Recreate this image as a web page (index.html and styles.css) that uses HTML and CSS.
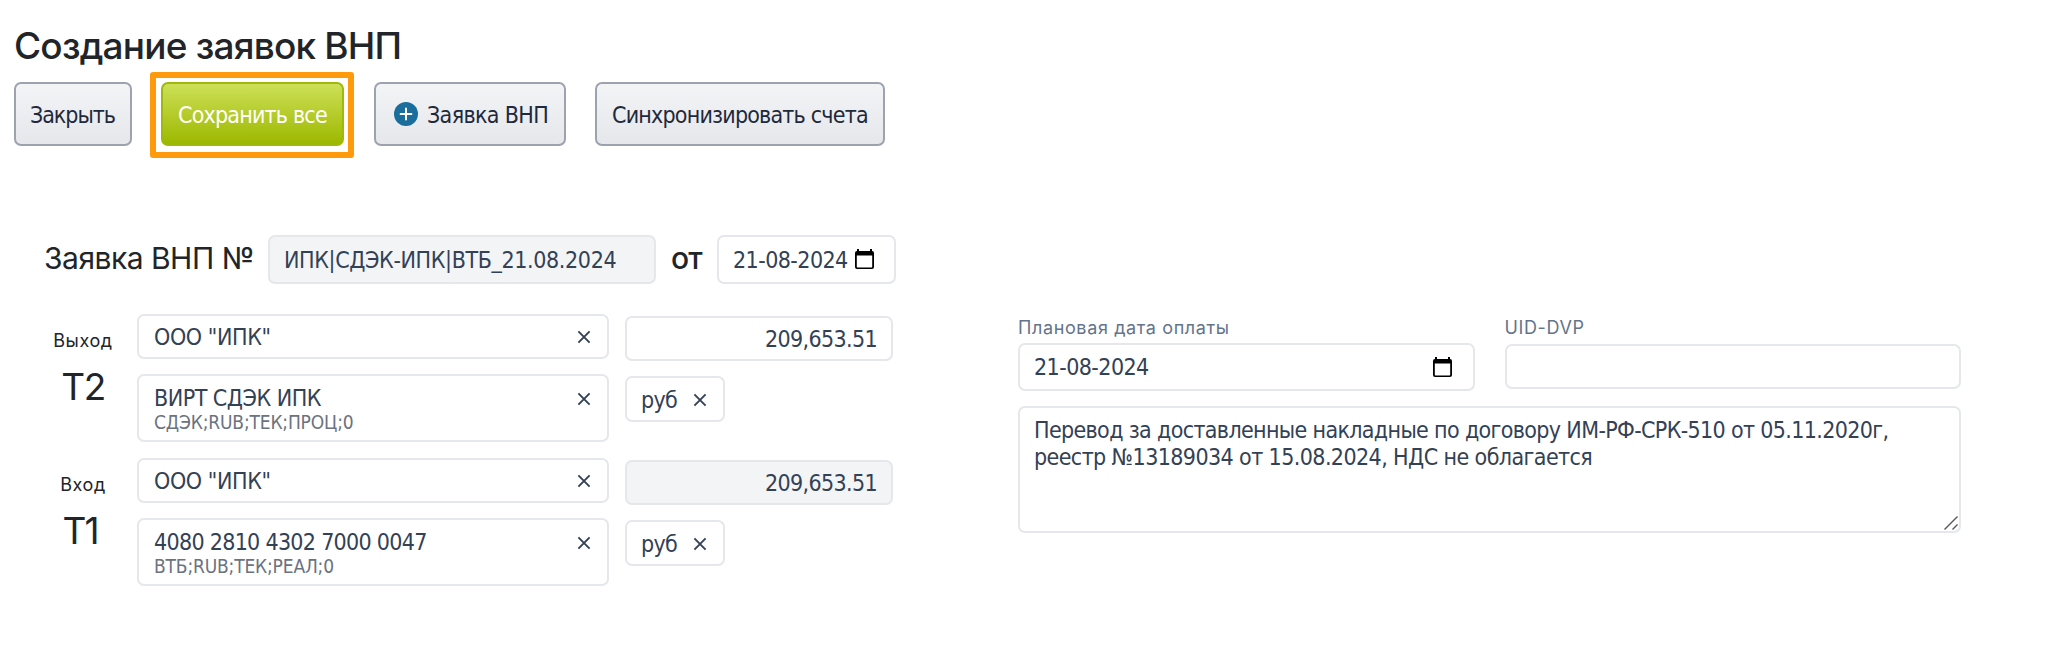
FILE: index.html
```
<!DOCTYPE html>
<html lang="ru">
<head>
<meta charset="utf-8">
<title>Создание заявок ВНП</title>
<link rel="stylesheet" href="styles.css">
</head>
<body>
<svg class="defs" width="0" height="0">
  <symbol id="calendar" viewBox="0 0 19 20"><path d="M2 0h2v2h11V0h2v2a2 2 0 0 1 2 2v14a2 2 0 0 1-2 2H2a2 2 0 0 1-2-2V4a2 2 0 0 1 2-2zM1.8 6.4v11.3q0 .7.7.7h14q.7 0 .7-.7V6.4z" fill="#000" fill-rule="evenodd"/></symbol>
  <symbol id="cross" viewBox="0 0 14 14"><path d="M1.4 1.4l11.2 11.2M12.6 1.4L1.4 12.6" stroke="#334155" stroke-width="1.9" fill="none"/></symbol>
</svg>
<main class="page">
  <h1 class="title">Создание заявок ВНП</h1>
  <div class="toolbar">
    <button class="btn btn-close">Закрыть</button>
    <div class="highlight"><button class="btn btn-save">Сохранить все</button></div>
    <button class="btn btn-add">
      <svg class="plus" viewBox="0 0 24 24"><circle cx="12" cy="12" r="12" fill="#1b6d9b"/><path d="M12 6.6v10.8M6.6 12h10.8" stroke="#fff" stroke-width="2" stroke-linecap="round"/></svg>
      <span>Заявка ВНП</span></button>
    <button class="btn btn-sync">Синхронизировать счета</button>
  </div>
  <div class="request">
    <span class="request-label">Заявка ВНП №</span>
    <div class="field number muted"><span>ИПК|СДЭК-ИПК|ВТБ_21.08.2024</span></div>
    <span class="request-from">от</span>
    <div class="field date-short"><span>21-08-2024</span><svg class="cal"><use href="#calendar"/></svg></div>
  </div>
  <div class="content">
    <div class="transfers">
      <section class="transfer">
        <div class="side"><span class="dir">Выход</span><span class="code">Т2</span></div>
        <div class="accounts">
          <div class="field single"><span class="company">ООО "ИПК"</span><svg class="x"><use href="#cross"/></svg></div>
          <div class="field double"><div class="stack"><span class="virtual">ВИРТ СДЭК ИПК</span><small class="sub">СДЭК;RUB;ТЕК;ПРОЦ;0</small></div><svg class="x"><use href="#cross"/></svg></div>
        </div>
        <div class="sums">
          <div class="field amount"><span>209,653.51</span></div>
          <div class="field currency"><span>руб</span><svg class="x"><use href="#cross"/></svg></div>
        </div>
      </section>
      <section class="transfer">
        <div class="side"><span class="dir">Вход</span><span class="code code-in">Т1</span></div>
        <div class="accounts">
          <div class="field single"><span class="company">ООО "ИПК"</span><svg class="x"><use href="#cross"/></svg></div>
          <div class="field double"><div class="stack"><span class="iban">4080 2810 4302 7000 0047</span><small class="sub">ВТБ;RUB;ТЕК;РЕАЛ;0</small></div><svg class="x"><use href="#cross"/></svg></div>
        </div>
        <div class="sums">
          <div class="field amount muted"><span>209,653.51</span></div>
          <div class="field currency"><span>руб</span><svg class="x"><use href="#cross"/></svg></div>
        </div>
      </section>
    </div>
    <div class="details">
      <div class="pair">
        <div class="group"><span class="caption">Плановая дата оплаты</span>
          <div class="field date-long"><span>21-08-2024</span><svg class="cal"><use href="#calendar"/></svg></div></div>
        <div class="group"><span class="caption">UID-DVP</span>
          <div class="field uid"></div></div>
      </div>
      <div class="field purpose"><span>Перевод за доставленные накладные по договору ИМ-РФ-СРК-510 от 05.11.2020г,</span><span class="purpose-last">реестр №13189034 от 15.08.2024, НДС не облагается</span>
        <svg class="grip" viewBox="0 0 14 14"><path d="M.5 13.5l13-13M8.5 13.5l5-5" stroke="#555" stroke-width="1.4"/></svg></div>
    </div>
  </div>
</main>
</body>
</html>
```
FILE: styles.css
```
* { box-sizing: border-box; }
body { margin: 0; background: #fff; color: #212529; font-family: Inter, "Liberation Sans", sans-serif; }
.defs { position: absolute; }
.page { padding: 22px 0 0 14px; }
span { white-space: nowrap; }
.title { margin: 0; height: 50px; font-size: 37px; line-height: 48px; font-weight: 500; letter-spacing: -.8px; }
.toolbar { display: flex; align-items: flex-start; height: 86px; }
.btn { height: 64px; margin: 10px 0 0; padding: 2px 0 0 14px; display: flex; align-items: center; border: 2px solid #9ca3af; border-radius: 7px; background: linear-gradient(#f3f4f6, #e5e7eb); color: #1e293b; font-family: "DejaVu Sans Condensed", "DejaVu Sans", sans-serif; font-stretch: condensed; font-size: 23px; line-height: 28px; text-align: left; white-space: nowrap; letter-spacing: -.8px; }
.btn-close { width: 118px; letter-spacing: -1.05px; }
.highlight { margin: 0 20px 0 18px; width: 204px; height: 86px; border: 6px solid #ff9a0c; border-radius: 3px; padding: 4px 0 0 5px; }
.btn-save { margin: 0; width: 183px; padding-left: 15px; color: #fff; border-color: #a0b80a; background: linear-gradient(#cde057, #9db800); }
.btn-add { width: 192px; padding-left: 18px; gap: 9px; letter-spacing: -.65px; }
.plus { width: 24px; height: 24px; flex: none; margin-top: -2px; }
.btn-sync { width: 290px; margin-left: 29px; padding-left: 15px; }
.request { display: flex; align-items: center; height: 48px; margin-top: 77px; padding-left: 30px; font-size: 30px; }
.request-label { width: 224px; line-height: 44px; margin-top: -3px; letter-spacing: -.5px; }
.request-from { width: 61px; padding-left: 15px; font-weight: 450; margin-top: -3px; line-height: 44px; letter-spacing: -.8px; }
.field { display: flex; align-items: center; border: 2px solid #e5e7eb; border-radius: 7px; padding: 0 15px 0 14px; background: #fff; color: #334155; font-family: "DejaVu Sans Condensed", "DejaVu Sans", sans-serif; font-stretch: condensed; font-size: 23px; line-height: 27px; letter-spacing: -.65px; }
.muted { background: #f3f4f6; }
.number { width: 388px; height: 49px; padding: 2px 0 0 14px; letter-spacing: -.38px; }
.date-short { width: 179px; height: 49px; justify-content: space-between; padding-right: 20px; }
.date-short span { margin-top: 2px; }
.date-short, .date-long { letter-spacing: -.55px; }
.cal { width: 19px; height: 20px; flex: none; }
.content { display: flex; margin-top: 31px; gap: 125px; }
.transfers { display: flex; flex-direction: column; gap: 16px; width: 879px; }
.transfer { display: flex; height: 128px; }
.side { width: 123px; padding-left: 15px; display: flex; flex-direction: column; align-items: center; }
.dir { font-size: 18px; line-height: 24px; margin-top: 15px; letter-spacing: .6px; }
.code { font-size: 37px; line-height: 48px; margin-top: 10px; letter-spacing: -1.5px; }
.code-in { letter-spacing: -2px; padding-right: 6px; }
.accounts { width: 472px; display: flex; flex-direction: column; gap: 15px; }
.single { height: 45px; justify-content: space-between; padding: 0 16px 0 15px; }
.company { margin-top: 2px; letter-spacing: -.4px; }
.virtual { letter-spacing: -.5px; }
.iban { letter-spacing: -.7px; }
.double { height: 68px; justify-content: space-between; align-items: flex-start; padding: 9px 16px 0 15px; }
.double .x { margin-top: 7px; }
.stack { display: flex; flex-direction: column; }
.sub { color: #6b7280; font-size: 19px; line-height: 22px; letter-spacing: -.17px; margin-top: -1px; }
.x { width: 14px; height: 14px; flex: none; }
.sums { margin: 2px 0 0 16px; display: flex; flex-direction: column; gap: 15px; }
.amount { width: 268px; height: 45px; padding-top: 2px; padding-right: 14px; justify-content: flex-end; }
.currency { width: 100px; height: 46px; justify-content: space-between; padding-right: 16px; }
.currency span { margin-top: 2px; }
.currency .x { margin-top: 2px; }
.details { width: 943px; padding-top: 2px; }
.pair { display: flex; gap: 30px; height: 90px; }
.group { flex: 1; }
.caption { display: block; height: 27px; font-size: 18px; line-height: 24px; color: #64748b; letter-spacing: .62px; }
.date-long { height: 48px; justify-content: space-between; padding-right: 21px; }
.uid { height: 45px; margin-top: 1px; }
.purpose { position: relative; display: block; height: 127px; padding-top: 9px; }
.purpose > span { display: block; width: max-content; }
.purpose-last { letter-spacing: -.59px; }
.grip { position: absolute; right: 1px; bottom: 1px; width: 14px; height: 14px; }
```
